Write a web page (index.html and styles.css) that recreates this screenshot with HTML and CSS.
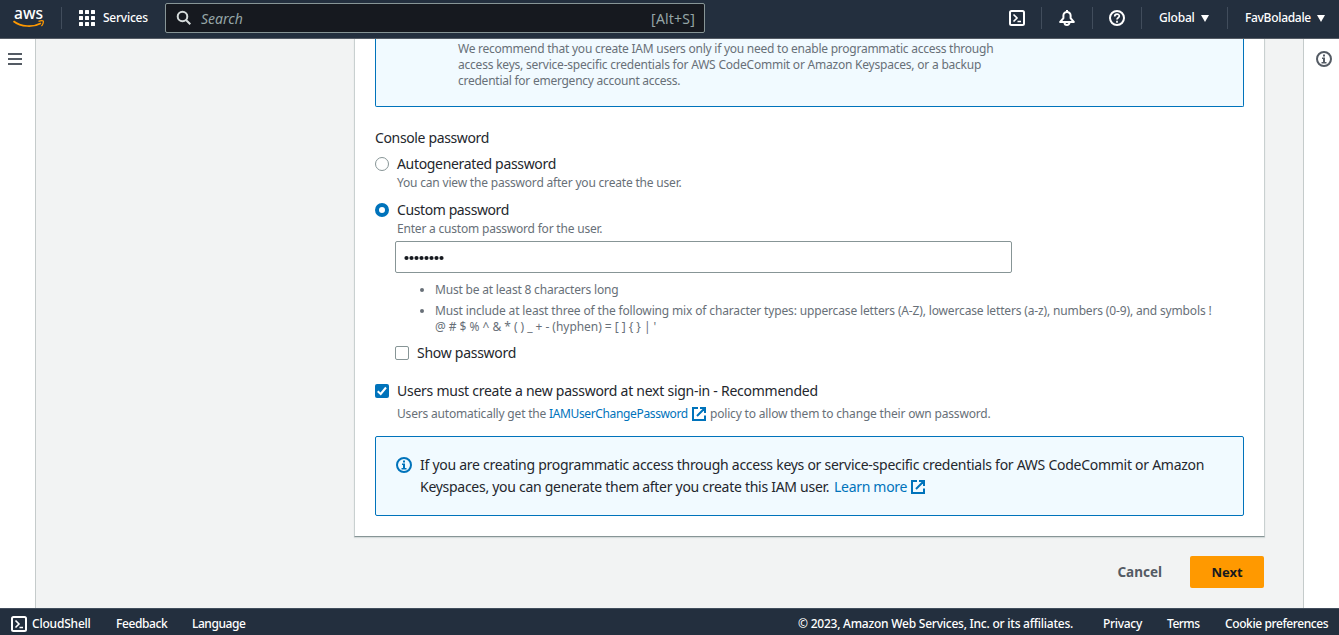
FILE: index.html
```html
<!DOCTYPE html>
<html lang="en">
<head>
<meta charset="utf-8">
<title>Create user | IAM | Global</title>
<link rel="stylesheet" href="styles.css">
</head>
<body>
<header class="topbar">
  <svg class="logo" width="32" height="24" viewBox="0 -4 32 24"><text class="logo-text" x="1" y="11" textLength="29" lengthAdjust="spacingAndGlyphs">aws</text><path d="M.5 13.200C8 19 20 19.600 28 15.200" fill="none" stroke="#f90" stroke-width="1.700"/><path d="M25.500 13.300C28 12.500 30 12.700 30.300 13.200S30 16.800 28.400 18.100" fill="none" stroke="#f90" stroke-width="1.300"/></svg>
  <i class="rule rule-logo"></i>
  <svg class="grid-icon" width="16" height="16" viewBox="0 0 16 16" fill="#fff"><rect width="4" height="4" rx=".5"/><rect x="6" width="4" height="4" rx=".5"/><rect x="12" width="4" height="4" rx=".5"/><rect y="6" width="4" height="4" rx=".5"/><rect x="6" y="6" width="4" height="4" rx=".5"/><rect x="12" y="6" width="4" height="4" rx=".5"/><rect y="12" width="4" height="4" rx=".5"/><rect x="6" y="12" width="4" height="4" rx=".5"/><rect x="12" y="12" width="4" height="4" rx=".5"/></svg>
  <span class="nav services">Services</span>
  <div class="search">
    <svg width="16" height="16" viewBox="0 0 16 16" fill="none" stroke="#d5dbdb" stroke-width="2"><circle cx="6.500" cy="6.500" r="4.800"/><path d="M10 10l4.300 4.300"/></svg>
    <span class="placeholder">Search</span><span class="shortcut">[Alt+S]</span>
  </div>
  <div class="tools">
    <span class="tool tool-shell"><svg width="16" height="16" viewBox="0 0 16 16" fill="none" stroke="#fff" stroke-width="2"><rect x="1" y="1" width="14" height="14" rx="1.500"/><path d="M4.500 4.500L8 8l-3.500 3.500M8.500 11.500H12" stroke-width="1.600"/></svg></span>
    <span class="tool tool-bell"><svg width="16" height="16" viewBox="0 0 16 16" fill="none" stroke="#fff" stroke-width="2" stroke-linejoin="round"><path d="M8 0v2M1.200 12h13.600L11.600 8.200V5.600a3.600 3.600 0 0 0-7.200 0v2.600zM5.500 12.500a2.500 2.500 0 0 0 5 0"/></svg></span>
    <span class="tool tool-help"><svg width="16" height="16" viewBox="0 0 16 16" fill="none" stroke="#fff" stroke-width="2"><circle cx="8" cy="8" r="7"/><path d="M5.700 6.500C5.700 3.400 10.400 3.500 10.300 6.100C10.300 7.800 8 7.700 8 9.500M8 10.700v2" stroke-width="1.700"/></svg></span>
    <span class="tool tool-region"><span class="nav global">Global</span><svg width="8" height="7" viewBox="0 0 8 7"><path d="M0 0h8L4 7z" fill="#fff"/></svg></span>
    <span class="tool tool-user"><span class="nav user">FavBoladale</span><svg width="8" height="7" viewBox="0 0 8 7"><path d="M0 0h8L4 7z" fill="#fff"/></svg></span>
  </div>
</header>
<div class="body">
  <aside class="rail rail-left"><svg width="14" height="12" viewBox="0 0 14 12" fill="#545b64"><path d="M0 0h14v2H0zM0 5h14v2H0zM0 10h14v2H0z"/></svg></aside>
  <main class="content">
    <section class="panel">
      <div class="notice notice-top"><p class="hint"><span class="t1">We recommend that you create IAM users only if you need to enable programmatic access through</span><br><span class="t2">access keys, service-specific credentials for AWS CodeCommit or Amazon Keyspaces, or a backup</span><br><span class="t3">credential for emergency account access.</span></p></div>
      <div class="label heading"><span class="l1">Console password</span></div>
      <div class="option"><i class="radio"></i><div><div class="label"><span class="l2">Autogenerated password</span></div><p class="hint"><span class="t4">You can view the password after you create the user.</span></p></div></div>
      <div class="option option-custom"><i class="radio radio-on"></i><div><div class="label"><span class="l3">Custom password</span></div><p class="hint"><span class="t5">Enter a custom password for the user.</span></p></div></div>
      <div class="custom">
        <div class="input"><svg width="40" height="6" viewBox="0 0 40 6" fill="#16191f"><circle cx="2.500" cy="3" r="2.100"/><circle cx="7.500" cy="3" r="2.100"/><circle cx="12.500" cy="3" r="2.100"/><circle cx="17.500" cy="3" r="2.100"/><circle cx="22.500" cy="3" r="2.100"/><circle cx="27.500" cy="3" r="2.100"/><circle cx="32.500" cy="3" r="2.100"/><circle cx="37.500" cy="3" r="2.100"/></svg></div>
        <ul class="rules hint"><li><i class="dot"></i><span class="t6">Must be at least 8 characters long</span></li><li><i class="dot"></i><div><span class="t7">Must include at least three of the following mix of character types: uppercase letters (A-Z), lowercase letters (a-z), numbers (0-9), and symbols !</span><br><span class="t8">@ # $ % ^ &amp; * ( ) _ + - (hyphen) = [ ] { } | '</span></div></li></ul>
        <div class="option"><i class="check"></i><div class="label"><span class="l4">Show password</span></div></div>
      </div>
      <div class="option option-reset"><i class="check check-on"><svg width="14" height="14" viewBox="0 0 14 14" fill="none" stroke="#fff" stroke-width="2"><path d="M2.700 7.300L5.700 10 11 3.500"/></svg></i><div><div class="label"><span class="l5">Users must create a new password at next sign-in - Recommended</span></div>
        <div class="hint policy"><span class="t9">Users automatically get the</span><a class="t10">IAMUserChangePassword</a><svg class="ext ext-policy" width="14" height="14" viewBox="0 0 14 14" fill="none" stroke="#0073bb" stroke-width="2"><path d="M6 1H1v12h12V8.500M8 1h5v5M12.700 1.300L5 9"/></svg><span class="t11">policy to allow them to change their own password.</span></div></div></div>
      <div class="notice notice-info"><svg class="info" width="16" height="16" viewBox="0 0 16 16" fill="none" stroke="#0073bb" stroke-width="2"><circle cx="8" cy="8" r="7"/><path d="M7 3.500h2v2H7zM6 6.500h3V11h1.500v1.500h-5V11H7V8H6z" fill="#0073bb" stroke="none"/></svg><div class="label"><span class="l6">If you are creating programmatic access through access keys or service-specific credentials for AWS CodeCommit or Amazon</span><div class="second"><span class="l7">Keyspaces, you can generate them after you create this IAM user.</span><a class="l8">Learn more</a><svg class="ext" width="14" height="14" viewBox="0 0 14 14" fill="none" stroke="#0073bb" stroke-width="2"><path d="M6 1H1v12h12V8.500M8 1h5v5M12.700 1.300L5 9"/></svg></div></div></div>
    </section>
    <div class="actions"><span class="cancel">Cancel</span><span class="next"><b>Next</b></span></div>
  </main>
  <aside class="rail rail-right"><svg width="16" height="16" viewBox="0 0 16 16" fill="none" stroke="#545b64" stroke-width="2"><circle cx="8" cy="8" r="7"/><path d="M7 3.500h2v2H7zM6 6.500h3V11h1.500v1.500h-5V11H7V8H6z" fill="#545b64" stroke="none"/></svg></aside>
</div>
<footer class="footer">
  <svg width="16" height="16" viewBox="0 0 16 16" fill="none" stroke="#fff" stroke-width="2"><rect x="1" y="1" width="14" height="14" rx="1.500"/><path d="M4.500 4.500L8 8l-3.500 3.500M8.500 11.500H12" stroke-width="1.600"/></svg>
  <span class="nav f1">CloudShell</span><span class="nav f2">Feedback</span><span class="nav f3">Language</span>
  <span class="nav f4">© 2023, Amazon Web Services, Inc. or its affiliates.</span><span class="nav f5">Privacy</span><span class="nav f6">Terms</span><span class="nav f7">Cookie preferences</span>
</footer>
</body>
</html>
```

FILE: styles.css
```css
* { box-sizing: border-box; }
body { margin: 0; width: 1339px; height: 635px; overflow: hidden; display: flex; flex-direction: column; background: #f2f3f3; color: #24272d; font-family: "Noto Sans", "Open Sans", sans-serif; }
svg, i { display: block; flex: none; }
p, ul { margin: 0; padding: 0; list-style: none; }
span, a { white-space: nowrap; }

.topbar { height: 39px; flex: none; display: flex; align-items: center; padding-left: 13px; padding-bottom: 2px; background: #232f3e; border-bottom: 1px solid #545b64; }
.logo { margin-top: -4px; }
.logo-text { font: 500 16.5px "Noto Sans", sans-serif; fill: #fff; }
.rule { width: 1px; height: 22px; background: #414d5c; }
.rule-logo { margin-left: 16px; }
.grid-icon { margin-left: 17px; }
.nav { display: block; flex: none; color: #fff; font-size: 12px; font-weight: 500; line-height: 16px; }
.services { margin-left: 8px; width: 45px; letter-spacing: -.25px; }
.search { width: 540px; height: 30px; margin-left: 17px; padding: 0 9px 0 10px; display: flex; align-items: center; border: 1px solid #879596; border-radius: 2px; background: #16191f; color: #95a5a6; font-size: 14px; }
.placeholder { margin-left: 9px; font-style: italic; }
.shortcut { margin-left: auto; letter-spacing: .2px; }
.tools { display: flex; height: 22px; margin-left: auto; }
.tool { display: flex; align-items: center; border-right: 1px solid #414d5c; }
.tool-shell { width: 33px; }
.tool-bell { width: 51px; padding-left: 17px; }
.tool-help { width: 49px; padding-left: 16px; }
.tool-region { width: 86px; padding-left: 17px; }
.tool-user { width: 111px; padding-left: 17px; border: 0; }
.global { width: 42px; letter-spacing: -.2px; }
.user { width: 72px; letter-spacing: -.3px; }

.body { flex: 1; min-height: 0; display: flex; }
.rail { flex: none; width: 36px; background: #fff; }
.rail-left { border-right: 1px solid #c5cbcb; padding: 14px 0 0 8px; }
.rail-right { border-left: 1px solid #c5cbcb; padding: 12px 0 0 12px; }
.content { flex: 1; padding: 0 38px 0 318px; }
.panel { height: 498px; width: 911px; padding: 0 20px; background: #fff; border: 1px solid #c9d0d0; border-top: 0; border-bottom-color: #879596; box-shadow: 0 1px 1px #d5dbdb; }
.notice { width: 869px; border: 1px solid #0073bb; border-radius: 2px; background: #f1faff; }
.notice-top { height: 68px; border-top: 0; border-top-left-radius: 0; border-top-right-radius: 0; padding: 2px 0 0 82px; }
.label { font-size: 14px; line-height: 22px; }
.hint { color: #687078; font-size: 12px; line-height: 16px; }
.heading { margin-top: 20px; }
.option { display: flex; gap: 8px; margin-top: 4px; }
.option-custom { margin-top: 8px; }
.radio { width: 14px; height: 14px; margin-top: 4px; border: 1px solid #879596; border-radius: 50%; background: #fff; }
.radio-on { border: 4px solid #0073bb; }
.custom { padding-left: 20px; }
.input { width: 617px; height: 32px; margin-top: 4px; padding: 2px 0 0 8px; display: flex; align-items: center; border: 1px solid #879596; border-radius: 2px; }
.rules { margin: 9px 0 7px; }
.rules li { display: flex; margin-bottom: 5px; }
.dot { width: 4px; height: 4px; margin: 6px 11px 0 25px; border-radius: 50%; background: #687078; }
.rules + .option { margin-top: 7px; }
.check { width: 14px; height: 14px; margin-top: 4px; border: 1px solid #879596; border-radius: 2px; background: #fff; }
.check-on { border: 0; background: #0073bb; }
.option-reset { margin-top: 16px; }
.policy { display: flex; align-items: center; margin-top: 4px; }
a { color: #0073bb; }
.notice-info { height: 80px; margin-top: 14px; padding: 17px 0 0 20px; display: flex; }
.info { margin: 3px 8px 0 0; }
.second { display: flex; align-items: center; }
.actions { display: flex; justify-content: flex-end; align-items: center; height: 32px; width: 910px; margin-top: 19px; }
.cancel { color: #545b64; font-size: 13.5px; font-weight: 700; margin-right: 28px; padding-bottom: 1px; }
.next { width: 74px; height: 32px; padding-bottom: 1px; display: flex; align-items: center; justify-content: center; border-radius: 2px; background: #f90; color: #16191f; font-size: 13px; }
.footer { height: 27px; flex: none; display: flex; align-items: center; padding: 3px 11px 0; background: #232f3e; border-top: 1px solid #414d5c; }
.f1 { margin-left: 5px; width: 59px; letter-spacing: -.2px; }
.f2 { margin-left: 25px; width: 52px; letter-spacing: -.4px; }
.f3 { margin-left: 24px; width: 54px; letter-spacing: -.45px; }
.f4 { margin-left: auto; width: 275px; letter-spacing: -.235px; }
.f5 { margin-left: 30px; width: 39px; letter-spacing: -.3px; }
.f6 { margin-left: 25px; width: 33px; letter-spacing: -.5px; }
.f7 { margin-left: 25px; width: 103px; letter-spacing: -.4px; }

/* Tracking of the body copy */
.t1 { letter-spacing: -.243px; }
.t2 { letter-spacing: -.215px; }
.t3 { letter-spacing: -.25px; }
.t4 { letter-spacing: -.19px; }
.t5 { letter-spacing: -.2px; }
.t6 { letter-spacing: -.19px; }
.t7 { letter-spacing: -.151px; }
.t8 { letter-spacing: -.04px; }
.t9 { width: 152px; letter-spacing: -.19px; }
.t10 { width: 139px; letter-spacing: -.36px; }
.t11 { margin-left: 4px; letter-spacing: -.18px; }
.ext-policy { margin-left: 4px; }
.l1 { letter-spacing: -.36px; }
.l2 { letter-spacing: -.33px; }
.l3 { letter-spacing: -.4px; }
.l4 { letter-spacing: -.27px; }
.l5 { letter-spacing: -.26px; }
.l6 { letter-spacing: -.267px; }
.l7 { width: 414px; letter-spacing: -.28px; }
.l8 { width: 77px; letter-spacing: -.3px; }
```
